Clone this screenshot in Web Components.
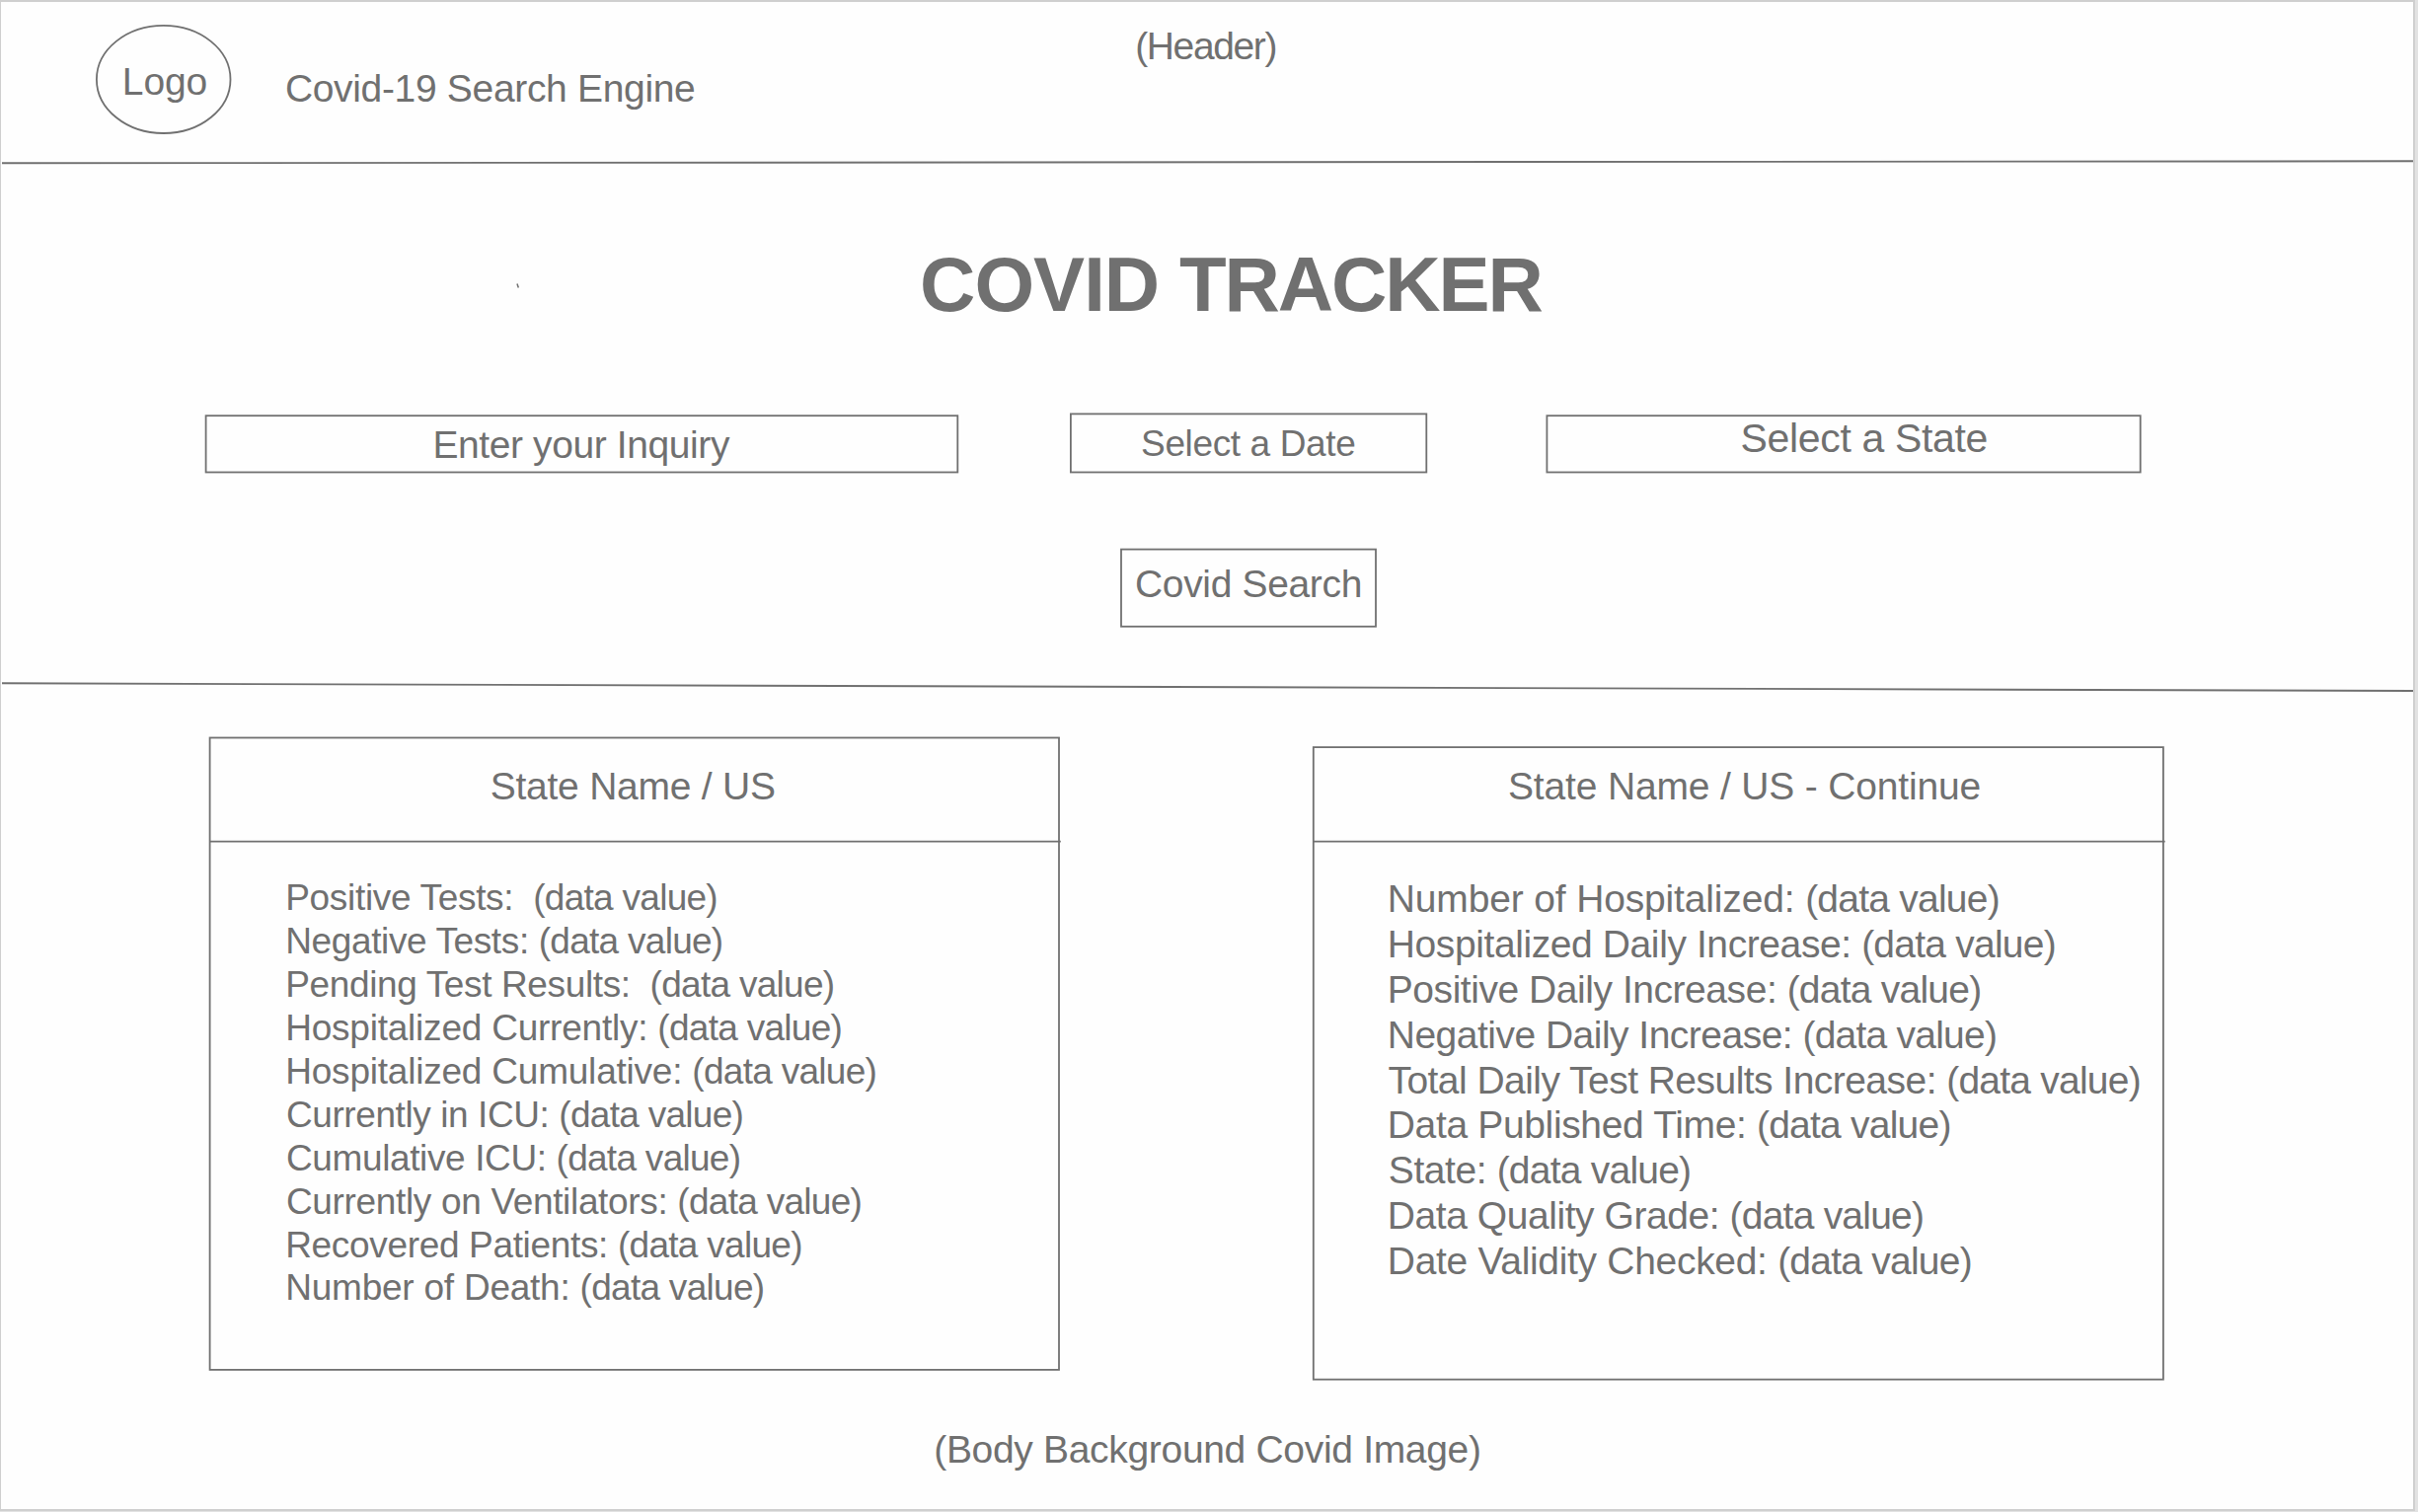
<!DOCTYPE html>
<html lang="en">
<head>
<meta charset="utf-8">
<title>Covid Tracker wireframe</title>
<style>
html,body{margin:0;padding:0;background:#e2e2e2}
body{width:2450px;height:1532px;overflow:hidden;color:#707070;font-family:"Liberation Sans",Arial,sans-serif}
</style>
</head>
<body>
<covid-page></covid-page>
<script>
const LINE = '#707070';
const LINE_HEIGHT = { 37: 41, 39: 43, 41: 46, 78: 88 };
/* Side bearings, in em, of the glyphs that begin and end a text. */
const LEFT = { L: .07, E: .065, P: .062, N: .062, H: .062, R: .062, D: .062, C: .042, S: .035, T: .045, '(': .045 };
const RIGHT = { o: .02, e: .02, y: -.005, h: .045, S: .025, R: .02, ')': .036 };

/* A line of text whose letter spacing is tuned so that its ink spans `width` px.
   A slotted <span> at its end is tuned on its own, to `tail` px. */
class WfText extends HTMLElement {
  connectedCallback() {
    const size = +this.getAttribute('size') || 39;
    const width = +this.getAttribute('width');
    const tail = +this.getAttribute('tail');
    const weight = this.getAttribute('weight') || 400;
    const text = this.textContent;
    const end = this.querySelector('span');
    const ctx = document.createElement('canvas').getContext('2d');
    ctx.font = `${weight} ${size}px "Liberation Sans"`;
    const scale = weight == 700 ? .45 : 1;
    const measure = t => ctx.measureText(t).width;
    const lsb = t => (LEFT[t[0]] || 0) * size * scale;
    const rsb = t => (RIGHT[t[t.length - 1]] || 0) * size * scale;
    const fit = (t, w) => (w - (measure(t) - lsb(t) - rsb(t))) / (t.length - 1);
    let spacing;
    if (end) {
      const t = end.textContent, head = text.slice(0, text.length - t.length);
      end.style.letterSpacing = fit(t, tail).toFixed(4) + 'px';
      spacing = (width - tail + lsb(head) - lsb(t) - measure(head)) / head.length;
    } else spacing = fit(text, width);
    this.attachShadow({ mode: 'open' }).innerHTML = `<style>
      :host{display:block;flex:none;width:${width}px;font:${weight} ${size}px/${LINE_HEIGHT[size]}px "Liberation Sans",Arial,sans-serif;
        white-space:pre;letter-spacing:${spacing.toFixed(4)}px}
      div{margin-left:${(-lsb(text)).toFixed(2)}px}
      </style><div><slot></slot></div>`;
  }
}
customElements.define('wf-text', WfText);

/* An outlined box: `rect` holds left, top, right and bottom of the stroke's centre line. */
class WfBox extends HTMLElement {
  connectedCallback() {
    const [l, t, r, b] = this.getAttribute('rect').split(' ').map(Number);
    const rule = this.getAttribute('rule');
    const shape = this.hasAttribute('round')
      ? `<ellipse cx="${(l + r) / 2}" cy="${(t + b) / 2}" rx="${(r - l) / 2}" ry="${(b - t) / 2}"/>`
      : `<rect x="${l}" y="${t}" width="${r - l}" height="${b - t}"/>`;
    this.attachShadow({ mode: 'open' }).innerHTML = `<style>
      :host{display:block;position:relative;flex:none;box-sizing:border-box}
      svg{position:absolute;left:0;top:0;width:100%;height:100%;overflow:visible;pointer-events:none}
      </style><svg fill="none" stroke="${LINE}" stroke-width="1.8">${shape}${
      rule ? `<path d="M${l} ${rule}H${r + 1.8}"/>` : ''}</svg><slot></slot>`;
  }
}
customElements.define('wf-box', WfBox);

/* A full-width, slightly sloping section divider. */
class WfDivider extends HTMLElement {
  connectedCallback() {
    const [h, y1, y2] = this.getAttribute('line').split(' ');
    this.attachShadow({ mode: 'open' }).innerHTML = `<style>:host{display:block}svg{display:block}</style>
      <svg width="2444" height="${h}"><path d="M1 ${y1}L2444 ${y2}" stroke="${LINE}" stroke-width="1.9"/></svg>`;
  }
}
customElements.define('wf-divider', WfDivider);

class CovidHeader extends HTMLElement {
  connectedCallback() {
    this.attachShadow({ mode: 'open' }).innerHTML = `<style>
      :host{display:flex;align-items:flex-start;height:158px}
      .logo{width:138px;height:111px;margin:23px 0 0 96px;padding:36px 0 0 29.5px}
      .brand{margin:66px 0 0 55.5px}
      .label{margin:23px 0 0 448px}
      </style>
      <wf-box class="logo" round rect=".9 .9 136.5 110"><wf-text width="83">Logo</wf-text></wf-box>
      <wf-text class="brand" width="413.5">Covid-19 Search Engine</wf-text>
      <wf-text class="label" width="141">(Header)</wf-text>`;
  }
}
customElements.define('covid-header', CovidHeader);

class CovidSearch extends HTMLElement {
  connectedCallback() {
    this.attachShadow({ mode: 'open' }).innerHTML = `<style>
      :host{display:block;height:522px;box-sizing:border-box;padding-top:76px}
      .title{display:flex;align-items:flex-start;padding-left:522px}
      .title svg{display:block;margin-top:43px}
      .title wf-text{margin-left:406.5px}
      .fields{display:flex;padding-left:206px;margin-top:86px}
      .fields wf-box{height:62px}
      .inquiry{width:765px;padding:11px 0 0 234px}
      .date{width:363px;margin-left:112px;padding:11px 0 0 73.4px}
      .state{width:604px;margin-left:119px;padding:3px 0 0 199px}
      .go{width:261px;height:82px;margin:75px 0 0 1134px;padding:15px 0 0 16.6px}
      </style>
      <div class="title"><svg width="4" height="6"><path d="M1 .6L2.3 4.6" stroke="${LINE}" stroke-width="1.5"/></svg>
        <wf-text size="78" weight="700" width="629.5" tail="366.5">COVID <span>TRACKER</span></wf-text></div>
      <div class="fields">
        <wf-box class="inquiry" rect="1.6 3.2 763.3 60.5"><wf-text width="298.6">Enter your Inquiry</wf-text></wf-box>
        <wf-box class="date" rect=".9 1.4 361.3 60.5"><wf-text size="37" width="215.6">Select a Date</wf-text></wf-box>
        <wf-box class="state" rect="1.4 3.2 602.7 60.5"><wf-text size="41" width="248.6">Select a State</wf-text></wf-box>
      </div>
      <wf-box class="go" rect="1 1.6 259 79.8"><wf-text width="227">Covid Search</wf-text></wf-box>`;
  }
}
customElements.define('covid-search', CovidSearch);

class CovidResults extends HTMLElement {
  connectedCallback() {
    const rows = (size, tail, list) => list.map(([t, w]) =>
      `<wf-text size="${size}" width="${w}" tail="${tail}">${t} <span>(data value)</span></wf-text>`).join('');
    const left = [['Positive Tests: ', 435.5], ['Negative Tests:', 441], ['Pending Test Results: ', 553.9],
      ['Hospitalized Currently:', 561], ['Hospitalized Cumulative:', 596], ['Currently in ICU:', 461],
      ['Cumulative ICU:', 458.2], ['Currently on Ventilators:', 581], ['Recovered Patients:', 520.6], ['Number of Death:', 482.2]];
    const right = [['Number of Hospitalized:', 617], ['Hospitalized Daily Increase:', 674], ['Positive Daily Increase:', 598.5],
      ['Negative Daily Increase:', 614.3], ['Total Daily Test Results Increase:', 760.8], ['Data Published Time:', 568.5],
      ['State:', 304.5], ['Data Quality Grade:', 540.4], ['Date Validity Checked:', 589]];
    this.attachShadow({ mode: 'open' }).innerHTML = `<style>
      :host{display:flex;align-items:flex-start;padding:44px 0 0 211px}
      .a{width:864px;height:644px;padding-top:29px}
      .b{width:865px;height:644px;margin:10px 0 0 254px;padding-top:19px}
      .list{display:flex;flex-direction:column;margin-top:71px}
      .a .title{margin-left:286px}.b .title{margin-left:199.4px}
      .a .list{gap:3px;padding-left:79.5px}
      .a .list :last-child{margin-top:-1px}
      .b .list{gap:2.9px;padding-left:78.2px}
      </style>
      <wf-box class="a" rect=".6 1.5 861 641.9" rule="106.6">
        <wf-text class="title" width="287">State Name / US</wf-text><div class="list">${rows(37, 184.5, left)}</div></wf-box>
      <wf-box class="b" rect=".8 1.1 861.9 641.7" rule="96.6">
        <wf-text class="title" width="477">State Name / US - Continue</wf-text><div class="list">${rows(39, 194.3, right)}</div></wf-box>`;
  }
}
customElements.define('covid-results', CovidResults);

class CovidPage extends HTMLElement {
  connectedCallback() {
    this.attachShadow({ mode: 'open' }).innerHTML = `<style>
      :host{display:flex;flex-direction:column;box-sizing:border-box;width:2447px;height:1531px;
        background:#fefefe;border:solid #cfcfcf;border-width:2px 2px 2px 1px}
      .foot{margin:47px 0 0 947px}
      </style>
      <covid-header></covid-header>
      <wf-divider line="8 5.3 3.3"></wf-divider>
      <covid-search></covid-search>
      <wf-divider line="12 2.3 10"></wf-divider>
      <covid-results></covid-results>
      <wf-text class="foot" width="551.5">(Body Background Covid Image)</wf-text>`;
  }
}
customElements.define('covid-page', CovidPage);
</script>
</body>
</html>
